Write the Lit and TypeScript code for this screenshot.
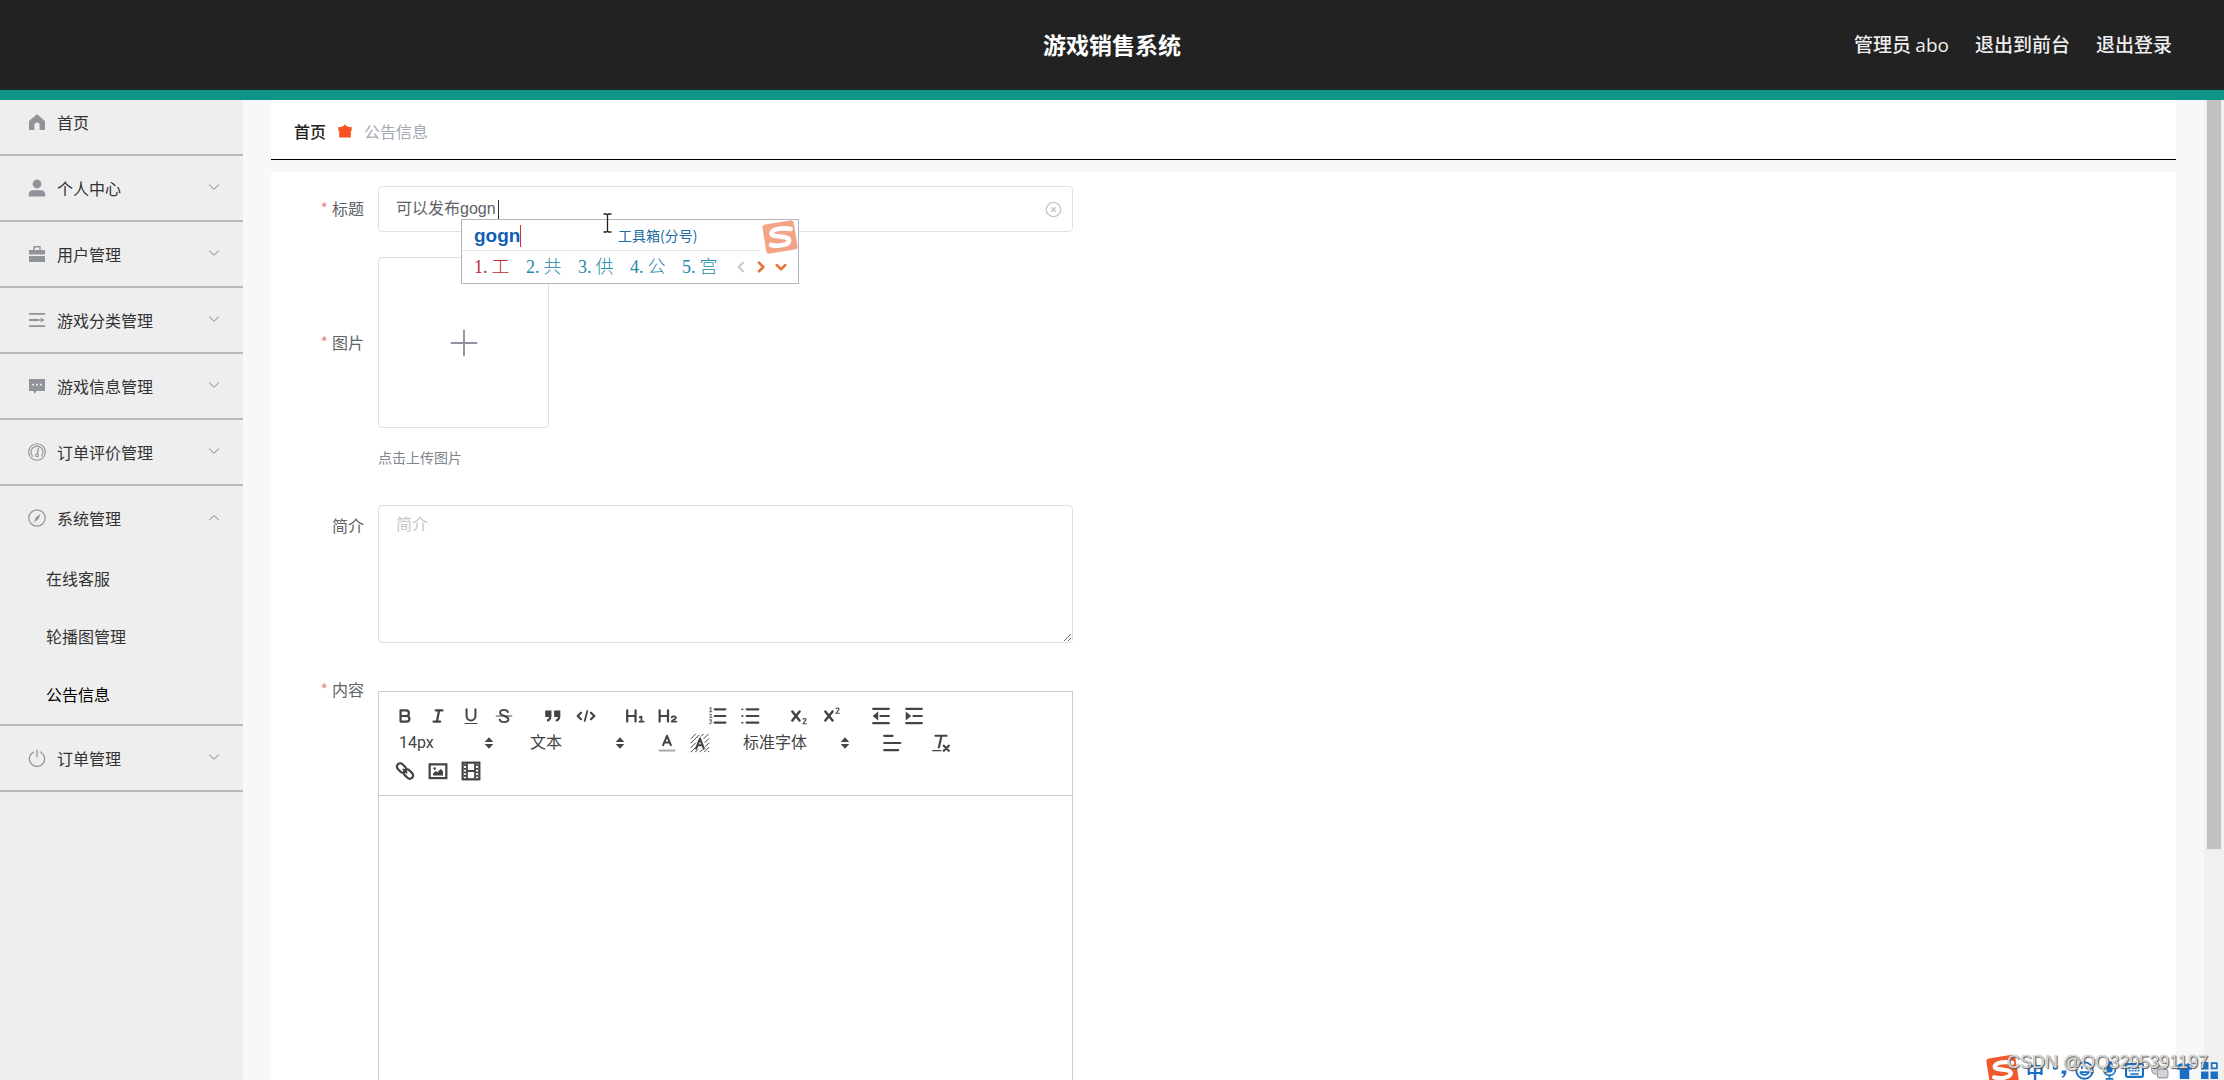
import { LitElement, html, css, svg, nothing } from "lit";
import { customElement, state } from "lit/decorators.js";

type Glyph = ReturnType<typeof svg>;

const stroke = (d: string, w = 2) =>
  svg`<path d=${d} fill="none" stroke="currentColor" stroke-width=${w} stroke-linecap="round" stroke-linejoin="round"/>`;
const fill = (d: string) => svg`<path d=${d} fill="currentColor" fill-rule="evenodd"/>`;
const icon = (g: Glyph | Glyph[], cls = "icon", box = "0 0 18 18") =>
  html`<svg class=${cls} viewBox=${box} aria-hidden="true">${g}</svg>`;

const menuIcons: Record<string, Glyph | Glyph[]> = {
  home: fill("M9 1.2 17 8v9h-5.4v-4.8a2.6 2.6 0 0 0-5.2 0V17H1V8z"),
  user: [
    svg`<circle cx="9" cy="5" r="4.4" fill="currentColor"/>`,
    fill("M.8 17.4v-2.2c0-2.6 1.6-4 4.2-4h8c2.6 0 4.2 1.4 4.2 4v2.2z"),
  ],
  bag: [
    fill("M1 5h16v4.6H1zM1 11h16v6H1z"),
    stroke("M6 4.6V1.8h6v2.800", 1.4),
  ],
  list: [
    fill("M1 2h16v1.8H1zM1 14.2h16V16H1zM1 8.1h10.5v1.8H1zM12.5 6.8 17 9l-4.5 2.2z"),
  ],
  chat: fill(
    "M1 2h16v12H8.5L6.5 17 5.5 14H1zM4.2 6.7v1.9h1.9V6.7zM8.05 6.7v1.9h1.9V6.7zM11.9 6.7v1.9h1.9V6.7z"
  ),
  gauge: [
    svg`<circle cx="9" cy="9" r="8.3" fill="none" stroke="currentColor" stroke-width="1.1"/>`,
    stroke("M4.6 13.2A6 6 0 1 1 13.4 13.2", 1.1),
    stroke("M10.3 5.2 9.4 10.8", 1.3),
    svg`<circle cx="9" cy="12.4" r="1.4" fill="none" stroke="currentColor" stroke-width="1.1"/>`,
  ],
  compass: [
    svg`<circle cx="9" cy="9" r="8.2" fill="none" stroke="currentColor" stroke-width="1.2"/>`,
    fill("M12.6 4.8 10.4 10 6 13.4 8 8.2z"),
  ],
  power: [
    stroke("M5.6 3A7.6 7.6 0 1 0 12.4 3", 1.2),
    stroke("M9 1v7", 1.2),
  ],
};

interface MenuEntry {
  label: string;
  icon: string;
  children?: string[];
  leaf?: boolean;
}

const menu: MenuEntry[] = [
  { label: "首页", icon: "home", leaf: true },
  { label: "个人中心", icon: "user" },
  { label: "用户管理", icon: "bag" },
  { label: "游戏分类管理", icon: "list" },
  { label: "游戏信息管理", icon: "chat" },
  { label: "订单评价管理", icon: "gauge" },
  { label: "系统管理", icon: "compass", children: ["在线客服", "轮播图管理", "公告信息"] },
  { label: "订单管理", icon: "power" },
];

/* Editor toolbar glyphs share the 18-unit grid. */
const lines = stroke("M7 4h9M7 9h9M7 14h9");
const tools: Record<string, { title: string; art: Glyph | Glyph[] }> = {
  bold: { title: "加粗", art: stroke("M5 4h5a2.5 2.5 0 0 1 0 5H5zM5 9h5.5a2.5 2.5 0 0 1 0 5H5z") },
  italic: { title: "斜体", art: stroke("M7 4h6M5 14h6M8 14 10 4") },
  underline: { title: "下划线", art: [stroke("M5 3v6a4 4 0 0 0 8 0V3", 1.8), stroke("M3.5 15.8h11", 1)] },
  strike: {
    title: "删除线",
    art: [stroke("M12.5 5.5C12 4 10.5 3.5 9 3.5c-2 0-3.5 1-3.5 2.5 0 3.5 7.5 2.5 7.5 6 0 1.5-1.7 2.5-4 2.5-2 0-3.5-.8-4-2.3", 1.7), stroke("M2 9h14", 1)],
  },
  quote: {
    title: "引用",
    art: [
      fill("M2 4h5.600v5.500C7.600 12 6 14 3.500 14v-2c1 0 1.800-.9 1.900-2.200H2zM10 4h5.600v5.500c0 2.500-1.600 4.500-4.100 4.500v-2c1 0 1.800-.9 1.900-2.200H10z"),
    ],
  },
  code: { title: "代码", art: [stroke("M4.500 6 1.500 9l3 3M13.500 6l3 3-3 3"), stroke("M10.200 4.500 7.800 13.500", 1.6)] },
  h1: { title: "标题 1", art: [stroke("M2 4v10M9.500 4v10M2 9h7.500"), stroke("M13.200 10.200 14.800 9.500V14M13 14h3.800", 1.6)] },
  h2: { title: "标题 2", art: [stroke("M1.500 4v10M9 4v10M1.500 9H9"), stroke("M12.300 10.200c.5-1.200 3.900-1.200 3.800.5 0 1.300-3 1.600-3.800 3.300h4.200", 1.6)] },
  ol: { title: "有序列表", art: [stroke("M7 3h9.500M7 9h9.500M7 15h9.500"), stroke("M2.500 1.800 3.500 1.300V5M2.300 5.200h2M2.300 7.500c2-.8 2.500.7 0 2.700h2.200M2.300 12.500h2l-1.200 1.500c2 0 1.500 2.200-.9 1.900", 0.8)] },
  ul: { title: "无序列表", art: [stroke("M6 3h10.500M6 9h10.500M6 15h10.500"), stroke("M2 3h.3M2 9h.3M2 15h.3", 1.6)] },
  sub: { title: "下标", art: [stroke("M3 5 9.500 13M9.500 5 3 13", 2.2), stroke("M12.600 12c.6-1.200 3.300-.8 2.600.7L12.600 16h3", 1)] },
  sup: { title: "上标", art: [stroke("M3 5 9.500 13M9.500 5 3 13", 2.2), stroke("M12.600 2.500c.6-1.200 3.300-.8 2.600.7L12.600 6.500h3", 1)] },
  outdent: { title: "减少缩进", art: [stroke("M2 2.500h14M8.500 9H16M2 15.500h14"), fill("M6.500 5v8L1.500 9z")] },
  indent: { title: "增加缩进", art: [stroke("M2 2.500h14M8.500 9H16M2 15.500h14"), fill("M1.500 5v8L6.500 9z")] },
  color: { title: "文字颜色", art: [stroke("M5.500 11 9 2.500 12.500 11M6.700 8.500h4.600", 1.8), svg`<path d="M1.500 15.800h15" stroke="#aaa" stroke-width="1.8"/>`] },
  background: {
    title: "背景颜色",
    art: [
      stroke("M1 5 5 1M1 9 8 2M1 13 5 9M1 17 5.500 12.500M5 17l2-2M9 17l2-2M12 1l-2 2M16.500 1l-4 4M17 5l-3.500 3.500M17 9l-3 3M17 13l-4 4M17 16.500l-.5.5", 0.9),
      stroke("M5.500 14 9 5l3.500 9M6.900 11h4.200", 1.9),
    ],
  },
  align: { title: "对齐方式", art: stroke("M2 2.500h7.500M2 9h14.500M2 15.500h12.500") },
  clean: { title: "清除格式", art: [stroke("M4 2.500h10M9.500 2.500 7 13", 1.9), stroke("M1.500 15.800h7.500", 1.1), stroke("M11.500 11.500l4.500 4.500M16 11.500 11.500 16", 2)] },
  link: {
    title: "链接",
    art: [
      svg`<rect x="1.2" y="3.3" width="9.4" height="6" rx="3" transform="rotate(45 5.9 6.3)" fill="none" stroke="currentColor" stroke-width="2"/>`,
      svg`<rect x="7.4" y="8.8" width="9.4" height="6" rx="3" transform="rotate(45 12.1 11.8)" fill="none" stroke="currentColor" stroke-width="2"/>`,
      stroke("M7.500 7.500 10.500 10.500", 1.6),
    ],
  },
  image: {
    title: "图片",
    art: [
      svg`<rect x="1.500" y="3" width="15" height="12.4" fill="none" stroke="currentColor" stroke-width="2"/>`,
      svg`<circle cx="6" cy="6.800" r="1.2" fill="currentColor"/>`,
      fill("M4.500 13v-1.800L7 9l1.500 1.200L11.500 7l2 2.500V13z"),
    ],
  },
  video: {
    title: "视频",
    art: [
      svg`<rect x="1.500" y="1.500" width="15" height="15" fill="none" stroke="currentColor" stroke-width="2"/>`,
      stroke("M5.400 2v14M12.600 2v14M5.400 9h7.200", 1.6),
      svg`<path d="M3.6 3v12M14.4 3v12" stroke="currentColor" stroke-width="2" stroke-dasharray="1.6 1.6"/>`,
    ],
  },
};

const sogou = svg`
  <rect x="3" y="2" width="30" height="28" rx="3" transform="rotate(-9 18 16)" fill="var(--tile)"/>
  <path d="M28 8.500C22 7 10.500 8 10 12.500c-.4 4.500 16 1.500 16.500 6.500.4 4.500-10 6.500-17 4.500" fill="none" stroke="#fff" stroke-width="4.4" stroke-linecap="round"/>`;

@customElement("app-root")
export class AppRoot extends LitElement {
  @state() private open = "系统管理";
  @state() private title = "可以发布gogn";

  static styles = css`
    :host {
      display: flex;
      flex-direction: column;
      height: 100vh;
      overflow: hidden;
      position: relative;
      background: #f7f8fa;
      color: #606266;
      font: 16px/24px "Noto Sans CJK SC", sans-serif;
    }
    * { box-sizing: border-box; }
    button, input, select, textarea { font: inherit; color: inherit; }
    button { border: 0; padding: 0; background: none; cursor: pointer; }
    a { color: inherit; text-decoration: none; }
    svg { display: block; flex: none; }

    .header {
      flex: none;
      display: grid;
      grid-template-columns: 1fr auto 1fr;
      align-items: center;
      height: 100px;
      padding: 0 52px 2px;
      background: #222;
      border-bottom: 10px solid #119488;
      color: #fff;
      z-index: 1;
    }
    .brand { grid-column: 2; margin: 0; font-size: 23px; font-weight: 700; line-height: 30px; }
    .account { display: flex; justify-content: flex-end; gap: 26px; font-size: 19px; font-weight: 500; color: #eee; }
    .latin { font-family: "Open Sans", sans-serif; }

    .body { flex: 1; display: flex; min-height: 0; }
    .sidebar { flex: none; width: 243px; margin-top: -10px; background: #eee; color: #333; }
    .menu, .submenu { list-style: none; margin: 0; padding: 0; }
    .entry { border-bottom: 2px solid #b9b9b9; }
    .head {
      display: flex;
      align-items: center;
      width: 100%;
      height: 64px;
      padding: 0 22px 0 28px;
      gap: 11px;
      text-align: left;
    }
    .head .icon { width: 18px; height: 18px; color: #909399; }
    .head .name { flex: 1; }
    .head .chevron { width: 14px; height: 14px; color: #a0a4aa; }
    .sub { display: flex; align-items: center; height: 58px; padding: 0 0 2px 46px; }
    .sub.active { color: #000; }

    .main { flex: 1; min-width: 0; padding: 0 28px; display: flex; flex-direction: column; overflow: hidden; }
    .crumbs {
      flex: none;
      display: flex;
      align-items: center;
      gap: 12px;
      height: 60px;
      padding: 2px 23px 0;
      background: #fff;
      border-bottom: 1px solid #000;
    }
    .crumbs .here { font-weight: 500; color: #222; }
    .crumbs .leaf { color: #a3aab5; }
    .crumbs .gift { width: 14px; height: 14px; color: #f8521f; }
    .form { flex: none; margin-top: 12px; padding: 14px 0 0 43px; background: #fff; display: flex; flex-direction: column; }
    .row { display: flex; max-width: 759px; }
    .label { flex: none; width: 64px; padding-right: 14px; text-align: right; white-space: nowrap; line-height: 44px; }
    .required::before { content: "*"; color: #e58a8a; margin-right: 4px; }
    .row.title { margin-bottom: 25px; }
    .row.picture { margin-bottom: 36px; }
    .row.picture .label { line-height: 171px; }
    .row.brief { margin-bottom: 48px; }
    .row.brief .label { line-height: 40px; }
    .row.content .label { line-height: 24px; margin-top: -14px; }
    .control { flex: 1; min-width: 0; position: relative; }
    .box { display: flex; align-items: center; height: 46px; border: 1px solid #dfe1e6; border-radius: 4px; padding: 0 10px 0 17px; }
    .box input { flex: 1; min-width: 0; border: 0; outline: 0; padding: 0; background: none; font-family: "Liberation Sans", "Noto Sans CJK SC", sans-serif; }
    .box .icon { width: 17px; height: 17px; color: #c4c7cd; }
    .upload { display: grid; place-items: center; width: 171px; height: 171px; border: 1px solid #dfe1e6; border-radius: 4px; color: #8c939d; }
    .upload .plus { width: 28px; height: 28px; }
    .hint { margin: 17px 0 0; font-size: 14px; color: #7f858c; }
    .brief textarea { display: block; width: 100%; height: 138px; padding: 5px 17px; border: 1px solid #dcdfe6; border-radius: 4px; outline: 0; resize: vertical; background: #fff; }
    .brief textarea::placeholder { color: #c5c8ce; }

    .caret { position: absolute; left: 120px; top: 14px; width: 1px; height: 20px; background: #333; }
    .ime {
      position: absolute;
      left: 83px;
      top: 33px;
      width: 338px;
      height: 65px;
      border: 1px solid #b2b7bf;
      background: #fff;
      z-index: 2;
      display: flex;
      flex-direction: column;
    }
    .typed { display: flex; align-items: center; height: 31px; margin-right: 38px; padding-left: 12px; border-bottom: 1px solid #e4e4e4; }
    .typed .pinyin { flex: none; width: 144px; color: #1160b4; }
    .typed b { display: inline-block; font: 700 19px/22px "Liberation Sans", sans-serif; border-right: 1px solid #d23030; }
    .typed .toolbox { font-size: 14px; color: #1c6ca0; }
    .picks { flex: 1; display: flex; align-items: center; padding: 0 10px 0 12px; font-size: 18px; color: #2389ad; }
    .picks button { width: 52px; text-align: left; font-family: "Liberation Serif", "Noto Sans CJK SC", serif; font-weight: 300; white-space: nowrap; }
    .picks .digit { margin-right: 4px; }
    .picks .first { color: #c02c35; }
    .picks .turns { flex: 1; display: flex; justify-content: space-between; color: #e2773d; }
    .picks .turns svg { width: 14px; height: 14px; }
    .picks .off { color: #ccc; }
    .ime .tile { position: absolute; right: -1px; top: -1px; width: 38px; height: 36px; --tile: #f5a387; }
    .pointer { position: absolute; left: 225px; top: 27px; width: 9px; height: 20px; z-index: 3; }

    .editor { border: 1px solid #ccc; height: 420px; color: #444; }
    .toolbar { padding: 10px 12px; border-bottom: 1px solid #ccc; display: flex; flex-direction: column; }
    .line { display: flex; align-items: center; height: 28px; }
    .line:first-child { height: 27px; }
    .group { display: flex; align-items: center; margin-right: 16px; }
    .tool { display: grid; place-items: center; width: 33px; height: 27px; padding-right: 6px; }
    .tool svg { width: 20px; height: 20px; }
    .picker { position: relative; display: flex; align-items: center; height: 28px; }
    .picker select { appearance: none; border: 0; outline: 0; background: none; width: 100%; height: 28px; padding: 0 0 0 8px; font-family: Roboto, "Noto Sans CJK SC", sans-serif; }
    .picker svg { position: absolute; right: 10px; width: 14px; height: 14px; pointer-events: none; }
    .picker.size, .picker.heading { width: 115px; }
    .picker.font { width: 127px; }

    .scroll { flex: none; width: 20px; padding: 0 3px; background: #f0f0f1; }
    .thumb { width: 14px; height: 749px; background: #c1c1c1; }

    .tray { position: absolute; right: 5px; bottom: -6px; display: flex; align-items: center; gap: 6px; color: #1a6fc4; z-index: 4; }
    .tray .tile { width: 35px; height: 32px; --tile: #ee5a2c; }
    .tray .mini { width: 19px; height: 19px; }
    .tray .zh { font-size: 18px; font-weight: 700; line-height: 18px; }
    .mark { position: absolute; right: 16px; bottom: 6px; z-index: 5; font: 18px/24px "Liberation Sans", sans-serif; color: rgba(235, 235, 235, 0.85); text-shadow: 1px 1px 1px #555, 0 0 1px #888; }
  `;

  private tool(key: string) {
    const t = tools[key];
    return html`<button class="tool" type="button" title=${t.title} aria-label=${t.title}>${icon(t.art, "glyph")}</button>`;
  }

  private group(...keys: string[]) {
    return html`<div class="group">${keys.map((k) => this.tool(k))}</div>`;
  }

  private picker(kind: string, label: string, value: string) {
    return html`<label class="picker ${kind}">
      <select aria-label=${label}><option>${value}</option></select>
      ${icon(fill("M9 1.500 14.500 7.800h-11zM9 16.500 14.500 10.200h-11z"), "updown")}
    </label>`;
  }

  private entry(e: MenuEntry) {
    const open = this.open === e.label;
    return html`<li class="entry">
      <button class="head" type="button" @click=${() => (this.open = open ? "" : e.label)}>
        ${icon(menuIcons[e.icon])}
        <span class="name">${e.label}</span>
        ${e.leaf ? nothing : icon(stroke(open ? "M3 11.500 9 6l6 5.500" : "M3 5l6 5.500L15 5", 1.4), "chevron")}
      </button>
      ${open && e.children
        ? html`<ul class="submenu">
            ${e.children.map((c) => html`<li><a class="sub ${c === "公告信息" ? "active" : ""}" href="#">${c}</a></li>`)}
          </ul>`
        : nothing}
    </li>`;
  }

  private renderIme() {
    return html`<div class="ime">
      <div class="typed">
        <span class="pinyin"><b>gogn</b></span>
        <span class="toolbox">工具箱(分号)</span>
      </div>
      <div class="picks">
        ${["工", "共", "供", "公", "宫"].map(
          (c, i) => html`<button type="button" class=${i ? "" : "first"}><span class="digit">${i + 1}.</span>${c}</button>`
        )}
        <span class="turns">
          ${icon(stroke("M11.500 3.500 6 9l5.500 5.500", 3), "off")} ${icon(stroke("M6.500 3.500 12 9l-5.500 5.500", 3.4))}
          ${icon(stroke("M3.500 6.500 9 12l5.500-5.500", 3.4))}
        </span>
      </div>
      ${icon(sogou, "tile", "0 0 36 32")}
    </div>`;
  }

  render() {
    return html`
      <header class="header">
        <h1 class="brand">游戏销售系统</h1>
        <nav class="account">
          <span>管理员 <span class="latin">abo</span></span>
          <a href="#">退出到前台</a>
          <a href="#">退出登录</a>
        </nav>
      </header>
      <div class="body">
        <nav class="sidebar"><ul class="menu">${menu.map((e) => this.entry(e))}</ul></nav>
        <main class="main">
          <nav class="crumbs">
            <a class="here" href="#">首页</a>
            ${icon(fill("M1.500 9h15v8.500h-15zM.5 4h4.500L6 2.500h1.500L9 0l1.500 2.500H12L13 4h4.500v5H.5z"), "gift")}
            <span class="leaf">公告信息</span>
          </nav>
          <form class="form" @submit=${(e: Event) => e.preventDefault()}>
            <div class="row title">
              <label class="label required" for="title">标题</label>
              <div class="control">
                <div class="box">
                  <input id="title" type="text" .value=${this.title} @input=${(e: Event) => (this.title = (e.target as HTMLInputElement).value)} />
                  <button type="button" aria-label="清空" @click=${() => (this.title = "")}>
                    ${icon([
                      svg`<circle cx="9" cy="9" r="7.6" fill="none" stroke="currentColor" stroke-width="1.4"/>`,
                      stroke("M7.300 7.300l3.400 3.400M10.700 7.300l-3.400 3.400", 1.8),
                    ])}
                  </button>
                </div>
                <span class="caret"></span>
                ${this.renderIme()}
                <svg class="pointer" viewBox="0 0 9 20" aria-hidden="true">
                  <path d="M.5 1h3l1 1 1-1h3M4.500 2v16M.5 19h3l1-1 1 1h3" fill="none" stroke="#222" stroke-width="1.3" />
                </svg>
              </div>
            </div>
            <div class="row picture">
              <label class="label required" for="picture">图片</label>
              <div class="control">
                <button class="upload" id="picture" type="button" aria-label="上传图片">
                  ${icon(stroke("M9 1v16M1 9h16", 1.2), "plus")}
                </button>
                <p class="hint">点击上传图片</p>
              </div>
            </div>
            <div class="row brief">
              <label class="label" for="brief">简介</label>
              <div class="control"><textarea id="brief" placeholder="简介"></textarea></div>
            </div>
            <div class="row content">
              <span class="label required">内容</span>
              <div class="control editor">
                <div class="toolbar">
                  <div class="line">
                    ${this.group("bold", "italic", "underline", "strike")} ${this.group("quote", "code")}
                    ${this.group("h1", "h2")} ${this.group("ol", "ul")} ${this.group("sub", "sup")}
                    ${this.group("outdent", "indent")}
                  </div>
                  <div class="line">
                    <div class="group">${this.picker("size", "字号", "14px")}</div>
                    <div class="group">${this.picker("heading", "段落", "文本")}</div>
                    ${this.group("color", "background")}
                    <div class="group">${this.picker("font", "字体", "标准字体")}</div>
                    ${this.group("align")} ${this.group("clean")}
                  </div>
                  <div class="line">${this.group("link", "image", "video")}</div>
                </div>
              </div>
            </div>
          </form>
        </main>
        <div class="scroll"><div class="thumb"></div></div>
      </div>
      <div class="tray">
        ${icon(sogou, "tile", "0 0 36 32")}
        <span class="zh">中</span>
        ${icon([svg`<circle cx="5" cy="6" r="2.4" fill="currentColor"/>`, fill("M11 9h4.500c.5 3-1 6-4 7l-.5-1c1.500-.8 2-1.800 2-3h-2z")], "mini")}
        ${icon([svg`<circle cx="9" cy="9" r="7.8" fill="none" stroke="currentColor" stroke-width="1.8"/>`, stroke("M5 10.500c1.500 3.500 6.500 3.500 8 0zM6.500 5.500v1.500M11.500 5.500v1.500", 1.6)], "mini")}
        ${icon([svg`<rect x="6" y="0" width="6" height="11" rx="3" fill="currentColor"/>`, stroke("M3.500 8c0 7.500 11 7.500 11 0M9 13.500V17M6 17h6", 1.6)], "mini")}
        ${icon([svg`<rect x="1" y="3" width="16" height="12" rx="1" fill="none" stroke="currentColor" stroke-width="2"/>`, svg`<path d="M3.500 6.500h11M3.500 9.200h11" stroke="currentColor" stroke-width="1.6" stroke-dasharray="1.8 1"/>`, stroke("M5.500 12.300h7", 1.4)], "mini")}
        ${icon(svg`<g fill="#d0d2d8" stroke="#9a9da6"><circle cx="6" cy="8" r="4.5"/><rect x="7" y="8" width="10" height="8" rx="2"/></g>`, "mini")}
        ${icon(fill("M6 2c1 2 5 2 6 0l5 2.500-1.500 4-2-.5v9h-9V8l-2 .5-1.500-4z"), "mini")}
        ${icon([fill("M1 1h7v7H1zM1 10h7v7H1zM10 10h7v7h-7z"), stroke("M11 2h5v5h-5z", 1.6)], "mini")}
      </div>
      <div class="mark">CSDN @QQ3295391197</div>
    `;
  }
}
